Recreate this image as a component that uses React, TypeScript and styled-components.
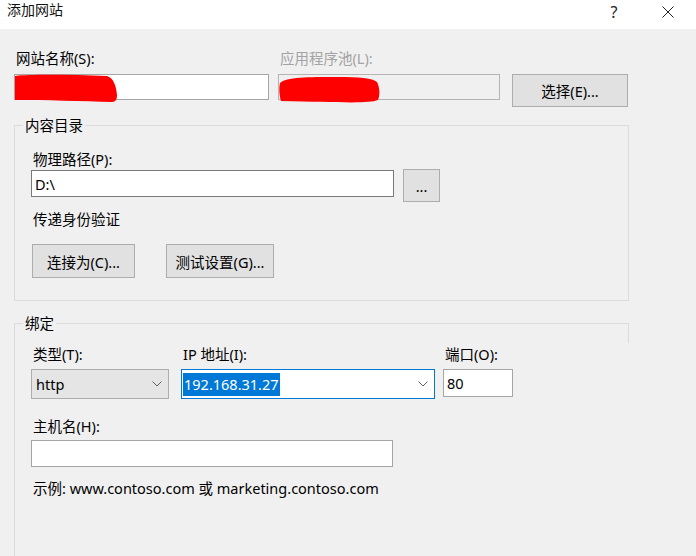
import styled, { createGlobalStyle } from 'styled-components'

const GlobalStyle = createGlobalStyle`
  html, body {
    margin: 0;
    padding: 0;
    background: #f0f0f0;
    overflow: hidden;
  }

  body {
    font-family: "Noto Sans", "Noto Sans CJK SC", sans-serif;
    font-size: 14.5px;
    color: #000;
  }
`

const Window = styled.div`
  width: 696px;
  height: 556px;
  overflow: hidden;
  background: #f0f0f0;
`

const TitleBar = styled.div`
  display: flex;
  align-items: center;
  height: 29px;
  padding-left: 7px;
  padding-right: 1px;
  background: #fff;
`

const TitleText = styled.div`
  flex-grow: 1;
  font-size: 14px;
  line-height: 20px;
  margin-top: -9px;
  color: #111;
`

const TitleButton = styled.div`
  display: flex;
  align-items: center;
  justify-content: center;
  width: 54px;
  height: 29px;
  margin-top: -6px;
  font-size: 16px;
  color: #222;
`

const Body = styled.div`
  padding: 20px 0 0 14px;
`

const Row = styled.div<{ $mt?: number }>`
  display: flex;
  align-items: flex-start;
  margin-top: ${p => p.$mt ?? 0}px;
`

const Field = styled.div<{ $w: number, $mr?: number }>`
  display: flex;
  flex-direction: column;
  width: ${p => p.$w}px;
  margin-right: ${p => p.$mr ?? 0}px;
`

const Label = styled.div<{ $disabled?: boolean, $mb?: number }>`
  line-height: 18px;
  padding-left: 2px;
  margin-bottom: ${p => p.$mb ?? 6}px;
  color: ${p => (p.$disabled === true ? '#a3a3a3' : '#000')};
  white-space: nowrap;
`

const Text = styled.div<{ $mt?: number }>`
  line-height: 18px;
  padding-left: 2px;
  margin-top: ${p => p.$mt ?? 0}px;
  white-space: nowrap;
`

const BoxWrap = styled.div`
  position: relative;
`

const TextBox = styled.input<{ $w?: number, $h: number, $dark?: boolean, $disabled?: boolean }>`
  display: block;
  box-sizing: border-box;
  width: ${p => (p.$w !== undefined ? `${p.$w}px` : '100%')};
  height: ${p => p.$h}px;
  margin: 0;
  padding: 0 3px;
  border: 1px solid ${p => (p.$dark === true ? '#7a7a7a' : p.$disabled === true ? '#b4b4b4' : '#a6a6a6')};
  background: ${p => (p.$disabled === true ? '#f0f0f0' : '#fff')};
  font: inherit;
  color: #000;
  outline: none;
  border-radius: 0;
`

const Scribble = styled.svg`
  position: absolute;
  left: 0;
  top: 0;
  overflow: visible;
  pointer-events: none;
`

const Button = styled.button<{ $w: number, $h: number }>`
  display: flex;
  align-items: center;
  justify-content: center;
  box-sizing: border-box;
  width: ${p => p.$w}px;
  height: ${p => p.$h}px;
  margin: 0;
  padding: 0;
  border: 1px solid #adadad;
  background: #e1e1e1;
  font: inherit;
  color: #000;
  border-radius: 0;
`

const ButtonCol = styled.div`
  padding-top: 25px;
  margin-left: 12px;
`

const Group = styled.fieldset<{ $mt: number, $open?: boolean }>`
  position: relative;
  box-sizing: border-box;
  width: 615px;
  min-width: 0;
  margin: ${p => p.$mt}px 0 0 0;
  padding: ${p => (p.$open === true ? '13px 16px 120px 16px' : '16px 16px 22px 16px')};
  border: 1px solid #dcdcdc;
  ${p => (p.$open === true ? 'border-right: none; border-bottom: none;' : '')}

  &::after {
    content: '';
    display: ${p => (p.$open === true ? 'block' : 'none')};
    position: absolute;
    right: 0;
    top: -9px;
    width: 1px;
    height: 20px;
    background: #dcdcdc;
  }
`

const Legend = styled.legend`
  padding: 0 2px;
  margin-left: -8px;
  line-height: 18px;
`

const Combo = styled.div<{ $w: number, $focus?: boolean }>`
  display: flex;
  align-items: center;
  box-sizing: border-box;
  width: ${p => p.$w}px;
  height: 30px;
  padding: ${p => (p.$focus === true ? '0 6px 0 1px' : '0 6px 0 4px')};
  border: 1px solid ${p => (p.$focus === true ? '#0078d7' : '#adadad')};
  background: ${p => (p.$focus === true ? '#fff' : '#e5e5e5')};
`

const ComboValue = styled.div`
  flex-grow: 1;
`

const Selected = styled.span`
  display: inline-block;
  line-height: 23px;
  padding: 0 1px;
  background: #0078d7;
  color: #fff;
`

function Chevron (): JSX.Element {
  return (
    <svg width="10" height="6" viewBox="0 0 10 6">
      <path d="M0.5 0.5 L5 5 L9.5 0.5" fill="none" stroke="#606060" strokeWidth="1" />
    </svg>
  )
}

function App (): JSX.Element {
  return (
    <Window>
      <GlobalStyle />
      <TitleBar>
        <TitleText>添加网站</TitleText>
        <TitleButton>?</TitleButton>
        <TitleButton>
          <svg width="12" height="12" viewBox="0 0 12 12">
            <path d="M0.5 0.5 L11.5 11.5 M11.5 0.5 L0.5 11.5" stroke="#222" strokeWidth="1" />
          </svg>
        </TitleButton>
      </TitleBar>

      <Body>
        <Row>
          <Field $w={255} $mr={9}>
            <Label $mb={7}>网站名称(S):</Label>
            <BoxWrap>
              <TextBox $h={26} readOnly value="" />
              <Scribble width="104" height="28">
                <path d="M1 2 C20 0 60 1 93 2 C99 4 102 10 103 21 C103 25 102 28 98 28 C70 27 30 26 1 26 Z" fill="#ff0000" />
              </Scribble>
            </BoxWrap>
          </Field>
          <Field $w={222}>
            <Label $mb={7} $disabled>应用程序池(L):</Label>
            <BoxWrap>
              <TextBox $h={26} $disabled readOnly value="" />
              <Scribble width="104" height="30">
                <path d="M2 9 C8 3 30 3 60 3 C80 3 95 4 99 8 C102 14 102 22 100 26 C90 30 60 28 3 27 C1 20 1 13 2 9 Z" fill="#ff0000" />
              </Scribble>
            </BoxWrap>
          </Field>
          <ButtonCol>
            <Button $w={116} $h={33}>选择(E)...</Button>
          </ButtonCol>
        </Row>

        <Group $mt={9}>
          <Legend>内容目录</Legend>
          <Label $mb={2}>物理路径(P):</Label>
          <Row>
            <TextBox $w={363} $h={27} $dark readOnly value="D:\" />
            <Button $w={37} $h={33} style={{ marginLeft: 9, marginTop: -1 }}>...</Button>
          </Row>
          <Text $mt={8}>传递身份验证</Text>
          <Row $mt={16}>
            <Button $w={103} $h={34} style={{ marginLeft: 1 }}>连接为(C)...</Button>
            <Button $w={108} $h={34} style={{ marginLeft: 31 }}>测试设置(G)...</Button>
          </Row>
        </Group>

        <Group $mt={13} $open>
          <Legend>绑定</Legend>
          <Row>
            <Field $w={138} $mr={12}>
              <Label>类型(T):</Label>
              <Combo $w={138}>
                <ComboValue>http</ComboValue>
                <Chevron />
              </Combo>
            </Field>
            <Field $w={254} $mr={8}>
              <Label>IP 地址(I):</Label>
              <Combo $w={254} $focus>
                <ComboValue><Selected>192.168.31.27</Selected></ComboValue>
                <Chevron />
              </Combo>
            </Field>
            <Field $w={70}>
              <Label>端口(O):</Label>
              <TextBox $h={28} readOnly value="80" />
            </Field>
          </Row>
          <Label $mb={5} style={{ marginTop: 18 }}>主机名(H):</Label>
          <TextBox $w={362} $h={27} readOnly value="" />
          <Text $mt={12}>示例: www.contoso.com 或 marketing.contoso.com</Text>
        </Group>
      </Body>
    </Window>
  )
}

export default App
